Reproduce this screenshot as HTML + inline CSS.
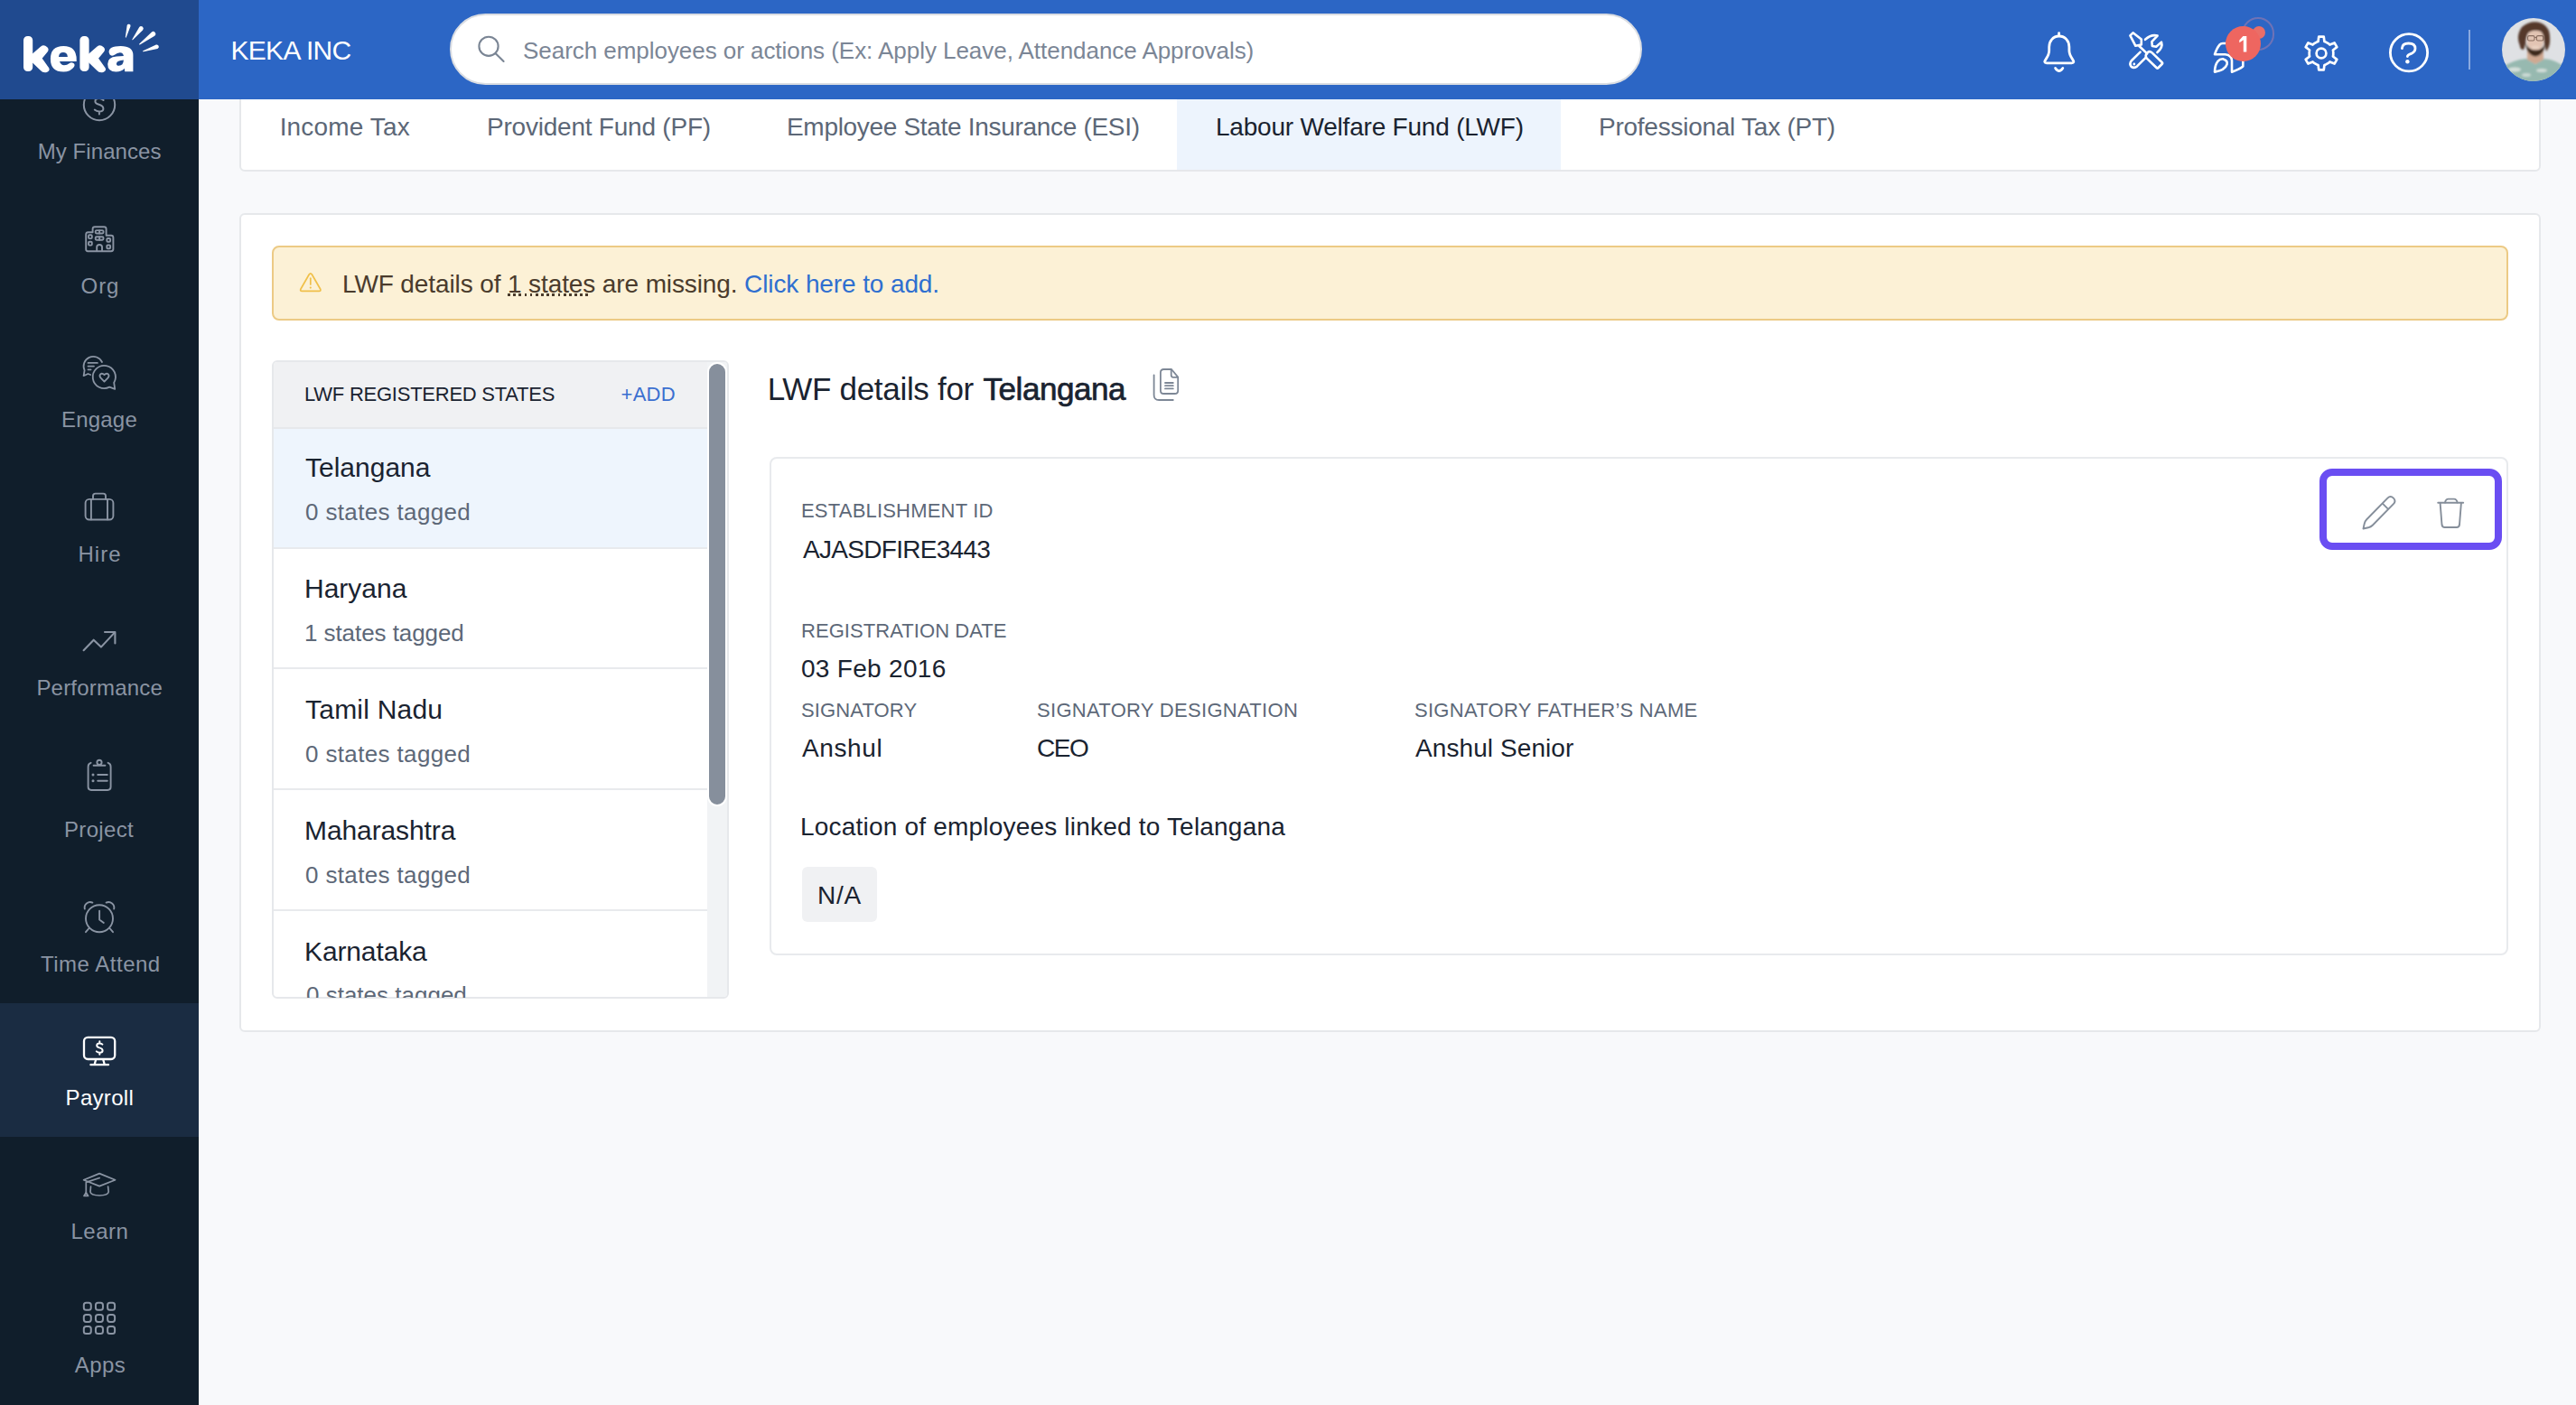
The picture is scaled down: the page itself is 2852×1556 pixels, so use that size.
<!DOCTYPE html>
<html><head><meta charset="utf-8">
<style>
*{margin:0;padding:0;box-sizing:border-box}
html,body{width:2852px;height:1556px;overflow:hidden;background:#f8f9fb;font-family:"Liberation Sans",sans-serif}
.a{position:absolute}
.t{position:absolute;white-space:nowrap;line-height:1}
svg{position:absolute;overflow:visible}
@media (max-width:1500px){html{zoom:0.5}}
</style></head><body>
<div class="a" style="left:265px;top:60px;width:2548px;height:130px;background:#fff;border:2px solid #e6e8eb;border-radius:6px"></div>
<div class="a" style="left:1303px;top:100px;width:425px;height:88px;background:#edf4fd"></div>
<div class="t" style="left:309.7px;top:126.8px;font-size:28px;color:#5c6777;letter-spacing:0.144px;font-weight:400;">Income Tax</div>
<div class="t" style="left:539.0px;top:126.8px;font-size:28px;color:#5c6777;letter-spacing:-0.222px;font-weight:400;">Provident Fund (PF)</div>
<div class="t" style="left:871.0px;top:126.8px;font-size:28px;color:#5c6777;letter-spacing:-0.31px;font-weight:400;">Employee State Insurance (ESI)</div>
<div class="t" style="left:1346.0px;top:126.8px;font-size:28px;color:#1a2330;letter-spacing:-0.208px;font-weight:400;">Labour Welfare Fund (LWF)</div>
<div class="t" style="left:1770.0px;top:126.8px;font-size:28px;color:#5c6777;letter-spacing:-0.25px;font-weight:400;">Professional Tax (PT)</div>
<div class="a" style="left:265px;top:236px;width:2548px;height:907px;background:#fff;border:2px solid #e6e8eb;border-radius:6px"></div>
<div class="a" style="left:301px;top:272px;width:2476px;height:83px;background:#fcf1d6;border:2px solid #ecca85;border-radius:8px"></div>
<svg style="left:325px;top:295px" width="40" height="35" viewBox="0 0 40 35" ><path d="M17.2 9 Q18.8 6.6 20.4 9 L29.6 25 Q30.8 27.3 28.2 27.3 L9.4 27.3 Q6.8 27.3 8 25 Z" fill="none" stroke="#f0c04a" stroke-width="1.7" stroke-linejoin="round"/><path d="M18.8 13.2 V20" stroke="#f0c04a" stroke-width="1.7" stroke-linecap="round"/><circle cx="18.8" cy="23.6" r="1.1" fill="#f0c04a"/></svg>
<div class="a" style="left:561.5px;top:325.4px;width:93.5px;height:2.8px;background:repeating-linear-gradient(90deg,#4a3b2c 0 2.8px,transparent 2.8px 6.17px)"></div>
<div class="t" style="left:379.0px;top:300.8px;font-size:28px;color:#4a3b2c;letter-spacing:-0.111px;font-weight:400;">LWF details of 1 states are missing. <span style="color:#2f6fd0">Click here to add.</span></div>
<div class="a" style="left:301px;top:399px;width:506px;height:707px;background:#fff;border:2px solid #e6e8eb;border-radius:6px;overflow:hidden"><div class="a" style="left:0;top:0;width:504px;height:74px;background:#f0f1f3;border-bottom:2px solid #e6e8eb"></div><div class="a" style="left:0;top:74px;width:480px;height:131px;background:#eef5fd"></div><div class="a" style="left:0;top:205px;width:480px;height:2px;background:#e8eaed"></div><div class="a" style="left:0;top:338px;width:480px;height:2px;background:#e8eaed"></div><div class="a" style="left:0;top:472px;width:480px;height:2px;background:#e8eaed"></div><div class="a" style="left:0;top:606px;width:480px;height:2px;background:#e8eaed"></div><div class="a" style="left:480px;top:0;width:24px;height:705px;background:#f1f3f5"></div><div class="a" style="left:480px;top:0;width:22px;height:492px;background:#868f9c;border:2px solid #fff;border-radius:11px"></div></div>
<div class="t" style="left:337.0px;top:425.9px;font-size:22px;color:#1a2330;letter-spacing:-0.25px;font-weight:400;">LWF REGISTERED STATES</div>
<div class="t" style="left:687.5px;top:425.9px;font-size:22px;color:#3a6fd0;letter-spacing:0.3px;font-weight:400;">+ADD</div>
<div class="t" style="left:338.0px;top:502.6px;font-size:30px;color:#1a2330;letter-spacing:0.0px;font-weight:400;">Telangana</div>
<div class="t" style="left:338.0px;top:553.5px;font-size:26px;color:#5d6878;letter-spacing:0.357px;font-weight:400;">0 states tagged</div>
<div class="t" style="left:337.0px;top:636.6px;font-size:30px;color:#1a2330;letter-spacing:0.0px;font-weight:400;">Haryana</div>
<div class="t" style="left:337.0px;top:687.5px;font-size:26px;color:#5d6878;letter-spacing:-0.071px;font-weight:400;">1 states tagged</div>
<div class="t" style="left:338.0px;top:770.6px;font-size:30px;color:#1a2330;letter-spacing:0.222px;font-weight:400;">Tamil Nadu</div>
<div class="t" style="left:338.0px;top:821.5px;font-size:26px;color:#5d6878;letter-spacing:0.357px;font-weight:400;">0 states tagged</div>
<div class="t" style="left:337.0px;top:904.6px;font-size:30px;color:#1a2330;letter-spacing:-0.1px;font-weight:400;">Maharashtra</div>
<div class="t" style="left:338.0px;top:955.5px;font-size:26px;color:#5d6878;letter-spacing:0.357px;font-weight:400;">0 states tagged</div>
<div class="t" style="left:337.0px;top:1038.6px;font-size:30px;color:#1a2330;letter-spacing:-0.125px;font-weight:400;">Karnataka</div>
<div class="a" style="left:303px;top:1080px;width:480px;height:25px;overflow:hidden"><div class="t" style="left:36px;top:9.0px;font-size:26px;color:#5d6878">0 states tagged</div></div>
<div class="t" style="left:849.7px;top:413.4px;font-size:35px;color:#1a2330;letter-spacing:-0.3px">LWF details for</div>
<div class="t" style="left:1088.6px;top:413.4px;font-size:35px;color:#1a2330;letter-spacing:-0.47px;-webkit-text-stroke:0.7px #1a2330">Telangana</div>
<svg style="left:1265px;top:400px" width="50" height="50" viewBox="0 0 50 50" ><g fill="none" stroke="#7d8796" stroke-width="1.8" stroke-linecap="round" stroke-linejoin="round"><path d="M12.6 15.3 V37.4 Q12.6 43 18.2 43 H33.8"/><path d="M32 9 H23.5 Q19.9 9 19.9 12.6 V32.4 Q19.9 36 23.5 36 H35.6 Q39.2 36 39.2 32.4 V17.6 Z"/><path d="M31.7 9.3 V15.6 Q31.7 17.8 33.9 17.8 H39"/><path d="M25 24 H33.8 M25 27.2 H33.8 M25 30.4 H33.8"/></g></svg>
<div class="a" style="left:852px;top:506px;width:1925px;height:552px;background:#fff;border:2px solid #e8eaed;border-radius:8px"></div>
<div class="a" style="left:2568px;top:519px;width:202px;height:90px;border:8px solid #6a4ef2;border-radius:14px"></div>
<svg style="left:2600px;top:540px" width="60" height="60" viewBox="0 0 60 60" ><g fill="none" stroke="#858e9a" stroke-width="1.9" stroke-linejoin="round"><path d="M20.25 35.25 L43.4 11.6 Q46.6 8.4 49.9 11.6 Q53.1 14.9 49.9 18.1 L26.75 41.75 Q25 43.5 22 44.3 L16.5 45.5 L17.7 40 Q18.5 37 20.25 35.25 Z"/><path d="M37.6 17.4 L44.1 23.9"/></g></svg>
<svg style="left:2690px;top:540px" width="50" height="50" viewBox="0 0 50 50" ><g fill="none" stroke="#858e9a" stroke-width="1.9" stroke-linejoin="round" stroke-linecap="round"><path d="M9.2 16.7 H37.2"/><path d="M17 16.5 Q17.8 12.6 20.6 12.6 H27 Q29.8 12.6 30.6 16.5"/><path d="M11.6 17 L13.5 41 Q13.9 44 16.6 44 H29.9 Q32.6 44 33 41 L34.9 17"/></g></svg>
<div class="t" style="left:887.0px;top:555.4px;font-size:22px;color:#5d6878;letter-spacing:0.2px;font-weight:400;">ESTABLISHMENT ID</div>
<div class="t" style="left:889.0px;top:594.8px;font-size:28px;color:#1a2330;letter-spacing:-0.7px;font-weight:400;">AJASDFIRE3443</div>
<div class="t" style="left:887.0px;top:688.0px;font-size:22px;color:#5d6878;letter-spacing:0.062px;font-weight:400;">REGISTRATION DATE</div>
<div class="t" style="left:887.0px;top:726.7px;font-size:28px;color:#1a2330;letter-spacing:0.3px;font-weight:400;">03 Feb 2016</div>
<div class="t" style="left:887.0px;top:776.2px;font-size:22px;color:#5d6878;letter-spacing:0.125px;font-weight:400;">SIGNATORY</div>
<div class="t" style="left:1148.0px;top:776.2px;font-size:22px;color:#5d6878;letter-spacing:0.3px;font-weight:400;">SIGNATORY DESIGNATION</div>
<div class="t" style="left:1566.0px;top:776.2px;font-size:22px;color:#5d6878;letter-spacing:0.273px;font-weight:400;">SIGNATORY FATHER’S NAME</div>
<div class="t" style="left:888.0px;top:815.1px;font-size:28px;color:#1a2330;letter-spacing:0.6px;font-weight:400;">Anshul</div>
<div class="t" style="left:1148.0px;top:815.1px;font-size:28px;color:#1a2330;letter-spacing:-1.5px;font-weight:400;">CEO</div>
<div class="t" style="left:1567.0px;top:815.1px;font-size:28px;color:#1a2330;letter-spacing:0.083px;font-weight:400;">Anshul Senior</div>
<div class="t" style="left:886.0px;top:902.3px;font-size:28px;color:#1a2330;letter-spacing:0.2px;font-weight:400;">Location of employees linked to Telangana</div>
<div class="a" style="left:888px;top:960px;width:83px;height:61px;background:#f0f1f3;border-radius:6px"></div>
<div class="t" style="left:905.0px;top:977.8px;font-size:28px;color:#1a2330;letter-spacing:0.75px;font-weight:400;">N/A</div>
<div class="a" style="left:0;top:110px;width:220px;height:1446px;background:#101e2b"></div>
<div class="a" style="left:0;top:1111px;width:220px;height:148px;background:#1a2c42"></div>
<svg style="left:85px;top:90px" width="50" height="50" viewBox="0 0 50 50" ><g fill="none" stroke="#8a94a3" stroke-linecap="round" stroke-linejoin="round" stroke-width="2"><circle cx="25" cy="26" r="17.2"/><path d="M29.6 21 Q27.6 19 24.6 19 Q20.4 19 20.4 22.2 Q20.4 24.6 24.6 25.8 Q29.4 27.2 29.4 30.4 Q29.4 33.4 24.8 33.4 Q21.8 33.4 19.8 31.6 M24.9 33.6 V36.6"/></g></svg>
<svg style="left:85px;top:240px" width="50" height="50" viewBox="0 0 50 50" ><g fill="none" stroke="#8a94a3" stroke-linecap="round" stroke-linejoin="round" stroke-width="1.9"><path d="M12.2 38.2 H38 Q40.4 38.2 40.4 35.8 V23.2 Q40.4 20.8 38 20.8 H32.6 V13.6 Q32.6 11.2 30.2 11.2 H20 Q17.6 11.2 17.6 13.6 V17.3 H12.6 Q10.2 17.3 10.2 19.7 V36 Q10.2 38.2 12.2 38.2 Z"/><rect x="20.7" y="15.1" width="8.8" height="3.4" rx="1.2"/><rect x="20.7" y="22.3" width="8.8" height="3.4" rx="1.2"/><path d="M25.1 15.1 V18.5 M25.1 22.3 V25.7"/><rect x="13" y="20.3" width="3.8" height="3.8" rx="1"/><rect x="13" y="27.8" width="3.8" height="3.8" rx="1"/><rect x="33.3" y="24" width="3.8" height="3.8" rx="1"/><rect x="33.3" y="31.5" width="3.8" height="3.8" rx="1"/><path d="M22.2 38 V33.6 Q22.2 31 25.1 31 Q28 31 28 33.6 V38"/></g></svg>
<svg style="left:85px;top:385px" width="50" height="55" viewBox="0 0 50 55" ><g fill="none" stroke="#8a94a3" stroke-linecap="round" stroke-linejoin="round" stroke-width="1.8"><path d="M28 16 A10.6 10.6 0 0 0 8.6 25.2 L7.6 31.2 L12.4 29 L15.2 30"/><path d="M12.5 16.9 H22.9 M12.5 20.6 H19 M12.5 24.3 H15.6"/><path d="M36.2 43.6 A12.6 12.6 0 1 1 41.2 38.8 L42.2 45.8 Z"/><path d="M30.5 37.6 L26.4 33.4 Q24.6 31.2 26.2 29.4 Q28 27.8 30.5 30 Q33 27.8 34.8 29.4 Q36.4 31.2 34.6 33.4 Z"/></g></svg>
<svg style="left:85px;top:535px" width="50" height="50" viewBox="0 0 50 50" ><g fill="none" stroke="#8a94a3" stroke-linecap="round" stroke-linejoin="round" stroke-width="1.9"><rect x="9.6" y="17.9" width="30.8" height="22.6" rx="4.2"/><path d="M18 17.9 V14.2 Q18 11.6 20.6 11.6 H29.4 Q32 11.6 32 14.2 V17.9"/><path d="M15.9 18 V40.4 M34 18 V40.4"/></g></svg>
<svg style="left:85px;top:690px" width="50" height="40" viewBox="0 0 50 40" ><g fill="none" stroke="#8a94a3" stroke-linecap="round" stroke-linejoin="round" stroke-width="2.1"><path d="M7.6 30.2 L18.7 18.7 L26.9 26.6 L41.8 10.6"/><path d="M31 10 H42.4 V22.5"/></g></svg>
<svg style="left:85px;top:830px" width="50" height="55" viewBox="0 0 50 55" ><g fill="none" stroke="#8a94a3" stroke-linecap="round" stroke-linejoin="round" stroke-width="1.9"><path d="M15.6 14.8 Q12.6 15.6 12.6 19.2 V41.6 Q12.6 45 16 45 H34.2 Q37.6 45 37.6 41.6 V19.2 Q37.6 15.6 34.6 14.8"/><circle cx="25" cy="14.3" r="2.6"/><path d="M18.6 17.8 H31.4"/><path d="M23.2 28 H33.8 M23.2 34.8 H33.8"/></g><circle cx="18" cy="28" r="1.5" fill="#8a94a3"/><circle cx="18" cy="34.8" r="1.5" fill="#8a94a3"/></svg>
<svg style="left:85px;top:990px" width="50" height="50" viewBox="0 0 50 50" ><g fill="none" stroke="#8a94a3" stroke-linecap="round" stroke-linejoin="round" stroke-width="1.9"><circle cx="25" cy="27.2" r="15"/><path d="M8.8 16.6 A6.2 6.2 0 0 1 17.4 9.6"/><path d="M41.2 16.6 A6.2 6.2 0 0 0 32.6 9.6"/><path d="M13.6 38 L10 42.2 M36.4 38 L40 42.2"/><path d="M25.1 18.6 V28.4 L29.8 32"/></g></svg>
<svg style="left:85px;top:1140px" width="50" height="50" viewBox="0 0 50 50" ><g fill="none" stroke="#ffffff" stroke-width="2.3" stroke-linecap="round" stroke-linejoin="round"><rect x="8" y="8.8" width="34.2" height="24.2" rx="4.2"/><path d="M21 34 L19.6 39 M29.4 34 L30.8 39 M15.4 39.2 H35"/><path d="M28.4 16.6 Q27.4 15.4 25.3 15.4 Q22.2 15.4 22.2 17.8 Q22.2 19.6 25.2 20.4 Q28.6 21.2 28.6 23.6 Q28.6 25.8 25.4 25.8 Q23.2 25.8 21.8 24.4 M25.3 13.2 V15.4 M25.3 25.8 V27.8" stroke-width="2"/></g></svg>
<svg style="left:85px;top:1285px" width="50" height="50" viewBox="0 0 50 50" ><g fill="none" stroke="#8a94a3" stroke-linecap="round" stroke-linejoin="round" stroke-width="1.7"><path d="M25.1 14.6 L42.6 21.7 L25.1 28.6 L7.6 21.7 Z"/><path d="M25.2 19.5 L10.3 24.4 V35.6"/><path d="M10.3 35.6 L8 39.4 H12.6 Z"/><path d="M15.5 29.2 L15 35 Q15.5 38.8 25.1 39 Q34.7 38.8 35.2 35 L34.6 29.2"/></g></svg>
<svg style="left:85px;top:1435px" width="50" height="50" viewBox="0 0 50 50" ><g fill="none" stroke="#8a94a3" stroke-linecap="round" stroke-linejoin="round" stroke-width="2"><rect x="7.80" y="7.80" width="8" height="8" rx="2.6"/><rect x="20.95" y="7.80" width="8" height="8" rx="2.6"/><rect x="34.10" y="7.80" width="8" height="8" rx="2.6"/><rect x="7.80" y="20.95" width="8" height="8" rx="2.6"/><rect x="20.95" y="20.95" width="8" height="8" rx="2.6"/><rect x="34.10" y="20.95" width="8" height="8" rx="2.6"/><rect x="7.80" y="34.10" width="8" height="8" rx="2.6"/><rect x="20.95" y="34.10" width="8" height="8" rx="2.6"/><rect x="34.10" y="34.10" width="8" height="8" rx="2.6"/></g></svg>
<div class="t" style="left:41.7px;top:155.7px;font-size:24px;color:#8a94a3;letter-spacing:0.08px;font-weight:400;">My Finances</div>
<div class="t" style="left:89.6px;top:304.7px;font-size:24px;color:#8a94a3;letter-spacing:0.9px;font-weight:400;">Org</div>
<div class="t" style="left:68.0px;top:452.7px;font-size:24px;color:#8a94a3;letter-spacing:0.2px;font-weight:400;">Engage</div>
<div class="t" style="left:86.5px;top:601.7px;font-size:24px;color:#8a94a3;letter-spacing:1.0px;font-weight:400;">Hire</div>
<div class="t" style="left:40.4px;top:750.2px;font-size:24px;color:#8a94a3;letter-spacing:0.2px;font-weight:400;">Performance</div>
<div class="t" style="left:71.0px;top:907.2px;font-size:24px;color:#8a94a3;letter-spacing:0.333px;font-weight:400;">Project</div>
<div class="t" style="left:45.0px;top:1055.7px;font-size:24px;color:#8a94a3;letter-spacing:0.5px;font-weight:400;">Time Attend</div>
<div class="t" style="left:72.6px;top:1203.7px;font-size:24px;color:#ffffff;letter-spacing:0.3px;font-weight:400;">Payroll</div>
<div class="t" style="left:78.5px;top:1351.7px;font-size:24px;color:#8a94a3;letter-spacing:0.5px;font-weight:400;">Learn</div>
<div class="t" style="left:82.7px;top:1499.7px;font-size:24px;color:#8a94a3;letter-spacing:0.433px;font-weight:400;">Apps</div>
<div class="a" style="left:0;top:0;width:2852px;height:110px;background:#2c66c5"></div>
<div class="a" style="left:0;top:0;width:220px;height:110px;background:#204a8f"></div>
<svg style="left:0px;top:0px" width="220" height="110" viewBox="0 0 220 110" ><g fill="#fff" stroke="#fff" stroke-linejoin="round" stroke-width="2">
<rect x="27" y="41" width="8.2" height="37" rx="3.6"/>
<path d="M35.2 61.6 L45.8 52.2 Q48.6 50.2 51.6 53 Q53.4 55 51.8 56.8 L45.4 64.6 L53.2 75.6 Q54.6 78 51.6 79 Q48 80 45.6 77.4 L35.2 67.2 Z"/>
<rect x="89.4" y="41" width="8.2" height="37" rx="3.6"/>
<path d="M97.6 61.6 L108.2 52.2 Q111 50.2 114 53 Q115.8 55 114.2 56.8 L107.8 64.6 L115.6 75.6 Q117 78 114 79 Q110.4 80 108 77.4 L97.6 67.2 Z"/>
</g>
<g fill="#fff">
<path d="M70.3 50.9 Q84.7 50.9 84.7 66 L84.7 67.9 L66 67.9 Q67.6 72.2 71 72.2 Q74.4 72.2 76.6 70.2 Q79 68.6 81.4 70 Q83.4 71.6 82 74 Q78 79.5 70.3 79.5 Q55.9 79.5 55.9 65.2 Q55.9 50.9 70.3 50.9 Z"/>
<path d="M120.6 58 Q120 51 133.6 50.9 Q147.4 51 147.4 61 V79.3 H138.2 L137.8 75.8 Q134.6 79.6 128.4 79.6 Q119.2 79.6 119.2 71 Q119.2 63.2 129 62.6 L136.9 62 Q136.4 58.2 132.8 58.2 Q129.8 58.2 126.8 60.8 Q123.4 62.6 121.6 60.6 Z"/>
</g>
<path d="M65 62.9 Q65.4 58 70 58 Q74.6 58 74.9 62.9 Z" fill="#204a8f"/>
<path d="M128.9 70.4 Q129.4 67.2 136.9 66.6 Q136.6 72.8 131.6 72.8 Q128.9 72.8 128.9 70.4 Z" fill="#204a8f"/>
<g fill="#fff"><path d="M139.78 41.33 L144.53 29.11 A2.0 2.0 0 0 0 140.67 28.09 L138.82 41.07 A0.5 0.5 0 0 0 139.78 41.33 Z"/><path d="M147.20 44.11 L158.18 33.13 A2.5 2.5 0 0 0 154.22 30.07 L146.40 43.49 A0.5 0.5 0 0 0 147.20 44.11 Z"/><path d="M154.90 49.40 L171.23 39.75 A2.7 2.7 0 0 0 167.97 35.45 L154.30 48.60 A0.5 0.5 0 0 0 154.90 49.40 Z"/><path d="M158.76 57.27 L174.33 53.98 A2.3 2.3 0 0 0 172.87 49.62 L158.44 56.33 A0.5 0.5 0 0 0 158.76 57.27 Z"/></g></svg>
<div class="t" style="left:255.4px;top:40.6px;font-size:30px;color:#fff;letter-spacing:-0.643px;font-weight:400;">KEKA INC</div>
<div class="a" style="left:498px;top:15px;width:1320px;height:79px;background:#fff;border:2px solid #dadde2;border-radius:40px"></div>
<svg style="left:520px;top:30px" width="50" height="50" viewBox="0 0 50 50" ><g fill="none" stroke="#7a8594" stroke-width="2.1" stroke-linecap="round"><circle cx="21" cy="21.3" r="10.6"/><path d="M29 29.4 L37.6 38"/></g></svg>
<div class="t" style="left:579.0px;top:43.0px;font-size:26px;color:#7b8696;letter-spacing:-0.045px;font-weight:400;">Search employees or actions (Ex: Apply Leave, Attendance Approvals)</div>
<svg style="left:2250px;top:25px" width="60" height="60" viewBox="0 0 60 60" ><g fill="none" stroke="#fff" stroke-linecap="round" stroke-linejoin="round" stroke-width="2.8"><path d="M29.7 15 C23 15 18.7 20.5 18.7 27 V31 C18.7 35 17.5 37 15.2 40.4 C13 43.6 13.4 44.8 16 44.8 H43.6 C46.2 44.8 46.6 43.6 44.4 40.4 C42.1 37 40.9 35 40.9 31 V27 C40.9 20.5 36.6 15 29.7 15 Z"/><path d="M29.6 11.6 V14"/><path d="M25.6 50.4 Q29.7 56.6 33.8 50.4"/></g></svg>
<svg style="left:2340px;top:27px" width="60" height="60" viewBox="0 0 60 60" ><g fill="none" stroke="#fff" stroke-linecap="round" stroke-linejoin="round" stroke-width="2.6"><path d="M18.4 12.4 L21.5 9.3 L30.8 16.6 L30.8 22.4 L24.4 23.8 Z"/><path d="M28.4 24 L37.2 32.4"/><path d="M37.6 31 Q40.2 29.2 42.6 31.4 L53.6 42 Q54.6 43 53.6 44 L49.6 48 Q48.6 49 47.6 48 L36.8 37.6 Q34.6 35 36.8 32"/><path d="M29.6 30.6 L19.8 40.2 Q17.2 43.4 19.6 46.8 Q23 49 26 46.4 L35.6 36.8"/><path d="M35 16.8 Q42 10.6 48.6 12.6 L42.4 19.2 L42.8 24 L47.2 24.8 L53 19.6 Q55 25.4 48.4 31"/></g><circle cx="22.8" cy="44" r="1.4" fill="#fff"/></svg>
<svg style="left:2440px;top:15px" width="80" height="80" viewBox="0 0 80 80" ><g fill="none" stroke="#fff" stroke-linecap="round" stroke-linejoin="round" stroke-width="2.6"><path d="M27 33 H21 Q18.8 33 17.6 34.4 Q14.5 38 12 45.2 H23.5 Q30.6 45.8 31 52 V64.8 Q39.5 61.8 43.3 58.6 V50.5"/><path d="M12 64.6 Q12.2 57 15.2 53.2 Q18.2 49.8 21.6 50.4 Q26.6 52 25.6 56.2 Q23.6 62.8 12 64.6 Z"/></g></svg>
<div class="a" style="left:2481.6px;top:18.8px;width:36.8px;height:36.8px;border:2px solid rgba(140,120,175,0.7);border-radius:50%"></div>
<div class="a" style="left:2494px;top:29px;width:14px;height:14px;background:#e96e68;border-radius:50%"></div>
<div class="a" style="left:2464px;top:28.6px;width:39.4px;height:39.4px;background:#ee6660;border-radius:50%"></div>
<svg style="left:2464px;top:28.6px" width="40" height="40" viewBox="0 0 40 40" ><path d="M19.4 10.9 H23.3 V28.5 H19.8 V15.2 L15.3 18.3 V15.5 Z" fill="#fff"/></svg>
<svg style="left:2540px;top:28.5px" width="60" height="60" viewBox="0 0 60 60" ><g fill="none" stroke="#fff" stroke-linecap="round" stroke-linejoin="round" stroke-width="2.7"><path d="M24.98 17.58 L26.53 17.06 L27.25 11.60 L32.75 11.60 L33.47 17.06 L35.02 17.58 L38.25 19.44 L39.48 20.52 L44.56 18.42 L47.31 23.18 L42.94 26.53 L43.27 28.14 L43.27 31.86 L42.94 33.47 L47.31 36.82 L44.56 41.58 L39.48 39.48 L38.25 40.56 L35.02 42.42 L33.47 42.94 L32.75 48.40 L27.25 48.40 L26.53 42.94 L24.98 42.42 L21.75 40.56 L20.52 39.48 L15.44 41.58 L12.69 36.82 L17.06 33.47 L16.73 31.86 L16.73 28.14 L17.06 26.53 L12.69 23.18 L15.44 18.42 L20.52 20.52 L21.75 19.44 Z"/><circle cx="30" cy="30" r="5.4"/></g></svg>
<svg style="left:2640px;top:30px" width="60" height="60" viewBox="0 0 60 60" ><g fill="none" stroke="#fff" stroke-linecap="round" stroke-linejoin="round" stroke-width="2.8"><circle cx="27" cy="28.3" r="20.6"/><path d="M19.4 23.6 Q19.6 18 26.6 18 Q34 18 34 23.8 Q34 27.4 29.6 29.4 Q25.4 31 25.4 32.6"/></g><circle cx="25.4" cy="38.3" r="2.2" fill="#fff"/></svg>
<div class="a" style="left:2733px;top:33px;width:2px;height:44px;background:#8aa9e0"></div>
<svg style="left:2770px;top:20px" width="70" height="70" viewBox="0 0 70 70" ><defs><clipPath id="avc"><circle cx="35" cy="35" r="35"/></clipPath><filter id="avb"><feGaussianBlur stdDeviation="0.8"/></filter></defs>
<g clip-path="url(#avc)">
<rect width="70" height="70" fill="#dfe1e4"/>
<g filter="url(#avb)">
<path d="M-2 56 Q12 46 27 45 L37 51 L47 45 Q60 46 72 56 V72 H-2 Z" fill="#97b9b0"/>
<ellipse cx="14" cy="57" rx="7" ry="2.4" fill="#d6e0db"/>
<ellipse cx="44" cy="58" rx="6" ry="2" fill="#d2ddd8"/>
<ellipse cx="27" cy="63" rx="5" ry="2" fill="#cbdad4"/>
<path d="M28 36 L46 36 L46 46 L37 51 L28 46 Z" fill="#cfa992"/>
<path d="M20 31 Q15 20 22 10 Q30 3 40 4.5 Q53 8 53 21 Q54 31 49 37 L46 24 Q44 13 36 12 Q29 13 27 22 Q26 31 24 35 Q20 35 20 31 Z" fill="#54392a"/>
<ellipse cx="37" cy="24" rx="9.4" ry="13" fill="#e2c4b3"/>
<path d="M27 14 Q33 7 42 9.5 Q47 13 46.5 17 Q41 12.5 34 14 Q30 15 27 18 Z" fill="#54392a"/>
<path d="M26.5 27 Q27 41 37 42.5 Q47.5 41 47.5 27 Q45.5 36 37 35.5 Q29 35.5 26.5 27 Z" fill="#3c2a1f"/>
<ellipse cx="37" cy="32.2" rx="4.4" ry="1.5" fill="#ead3c4"/>
</g>
<g fill="none" stroke="#5a4034" stroke-width="1.1" opacity="0.65"><rect x="28.6" y="19.6" width="7.4" height="5.4" rx="1.6"/><rect x="38.4" y="19.6" width="7.4" height="5.4" rx="1.6"/><path d="M36 21.4 H38.4"/></g>
</g></svg>
</body></html>
